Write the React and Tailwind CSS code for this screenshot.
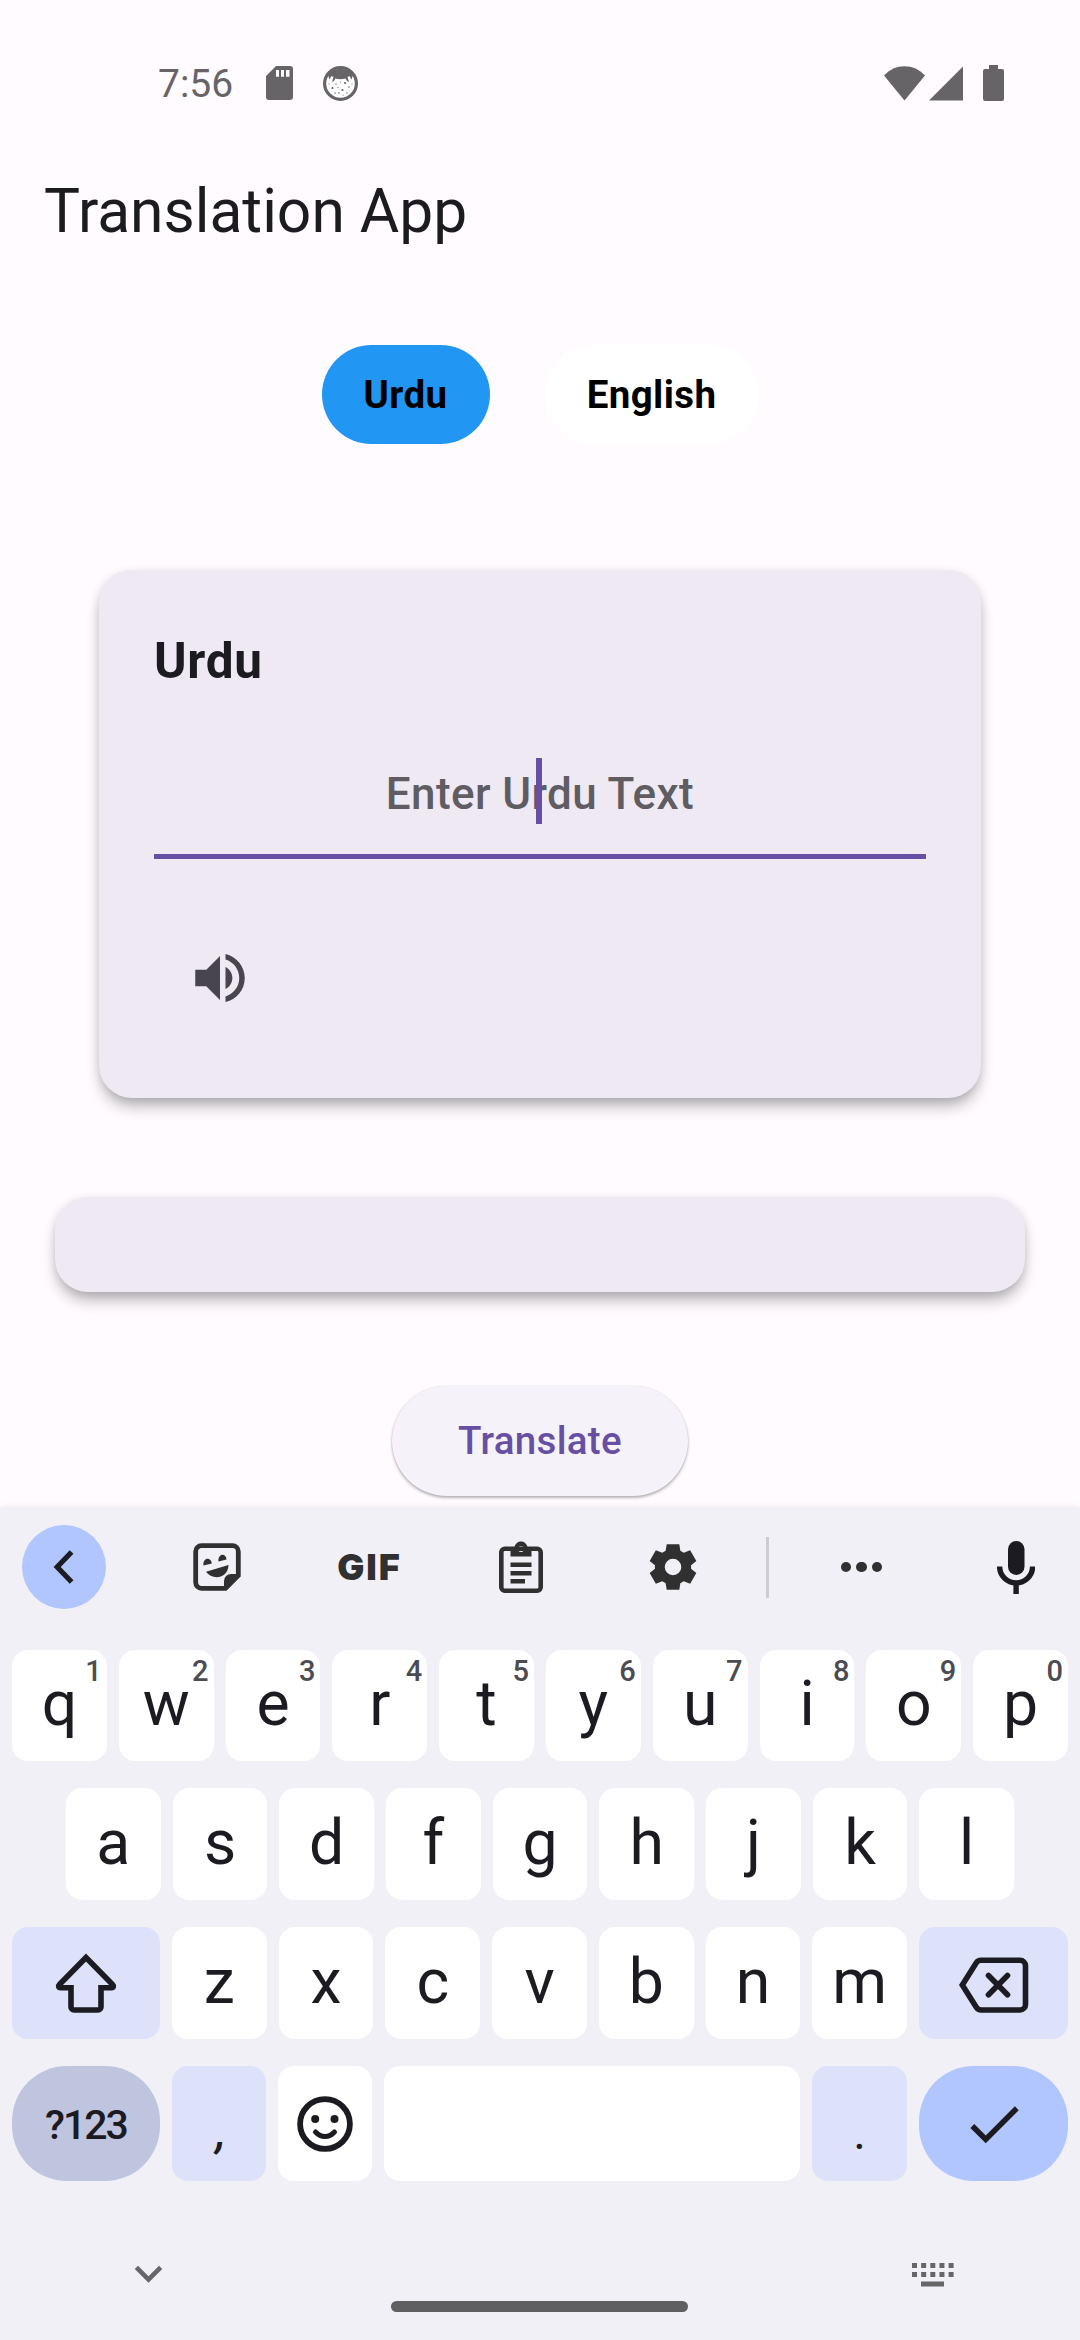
const ROW_1 = ['q', 'w', 'e', 'r', 't', 'y', 'u', 'i', 'o', 'p'];
const ROW_2 = ['a', 's', 'd', 'f', 'g', 'h', 'j', 'k', 'l'];
const ROW_3 = ['z', 'x', 'c', 'v', 'b', 'n', 'm'];

function StatusBar() {
  return (
    <div className="flex h-[124px] items-center pt-[42px] pr-[76px] pl-[158px] text-[#666467]">
      <span className="w-[108px] pt-[2px] text-[39px] leading-none">7:56</span>
      <svg width="27" height="34" viewBox="0 0 27 34" fill="currentColor">
        <path fillRule="evenodd" d="M10 0H24a3 3 0 0 1 3 3V31a3 3 0 0 1-3 3H3a3 3 0 0 1-3-3V10ZM10 4V10.700H13V4ZM15 4V10.700H18V4ZM20 4V10.700H23.500V4Z" />
      </svg>
      <svg className="ml-[30px]" width="35" height="35" viewBox="0 0 35 35" fill="currentColor">
        <circle cx="17.500" cy="17.500" r="15.900" fill="#fff" stroke="currentColor" strokeWidth="3.200" />
        <path d="M5 9C10 1 25 1 30 9L28.500 13.500l-2-3.500-2 1 1.500 5-2-1-1.500-2.500c-3 1-7 1-10 0L11 15l-2 1 1.500-5-2-1-2 3.500Z" />
        <g>
          <circle cx="9.500" cy="22" r="1.100" /><circle cx="13" cy="18" r=".7" /><circle cx="19.500" cy="24" r="1.100" />
          <circle cx="22" cy="17" r="1.100" /><circle cx="6" cy="18" r=".6" /><circle cx="16" cy="27" r=".8" />
          <circle cx="26" cy="21" r=".8" /><circle cx="12" cy="27" r=".7" /><circle cx="15" cy="21.500" r=".6" />
          <circle cx="24" cy="27" r=".7" /><circle cx="29" cy="18" r=".6" /><circle cx="20" cy="29" r=".6" /><circle cx="17.500" cy="16" r=".6" />
        </g>
      </svg>
      <div className="ml-auto flex items-center">
        <svg width="41" height="35" viewBox="0 0 41 35" fill="currentColor">
          <path d="M0 9.500C11-3 30-3 41 9.500L20.500 34.500Z" />
        </svg>
        <svg className="ml-[4px]" width="34" height="35" viewBox="0 0 34 35" fill="currentColor">
          <path d="M0 34.500L34 .5V34.500Z" />
        </svg>
        <svg className="ml-[20px]" width="21" height="36" viewBox="0 0 21 36" fill="currentColor">
          <path d="M6 0H15V4H19a2 2 0 0 1 2 2V34a2 2 0 0 1-2 2H2a2 2 0 0 1-2-2V6a2 2 0 0 1 2-2H6Z" />
        </svg>
      </div>
    </div>
  );
}

function InputCard() {
  return (
    <section className="mt-[126px] h-[528px] w-[882px] rounded-[33px] bg-[#eee9f3] px-[55px] pt-[62px] shadow-[0_10px_16px_-3px_rgba(0,0,0,0.32),0_1px_10px_rgba(0,0,0,0.08)]">
      <h2 className="text-[49.5px] leading-[58px] font-bold tracking-[0.7px] text-[#1c1b1f]">Urdu</h2>
      <div className="relative mt-[50px] flex h-[119px] items-start justify-center border-b-[5px] border-[#6750a4] pt-[28px]">
        <span className="text-[44px] leading-[52px] font-medium tracking-[0.4px] text-[#5f5c62]">Enter Urdu Text</span>
        <span className="absolute top-[18px] left-[382px] h-[66px] w-[5.500px] bg-[#6750a4]" />
      </div>
      <svg className="mt-[86px] ml-[33px]" width="66" height="66" viewBox="0 0 24 24" fill="#49454f">
        <path d="M3 9v6h4l5 5V4L7 9H3zm13.500 3c0-1.770-1.020-3.290-2.500-4.030v8.050c1.480-.73 2.500-2.250 2.500-4.020zM14 3.230v2.060c2.890.86 5 3.540 5 6.710s-2.110 5.850-5 6.710v2.060c4.010-.91 7-4.490 7-8.770s-2.990-7.860-7-8.770z" />
      </svg>
    </section>
  );
}

function ToolSlot({ children }) {
  return <div className="flex w-[152px] shrink-0 items-center justify-center">{children}</div>;
}

function Toolbar() {
  return (
    <div className="flex h-[120px] items-center pl-[22px] text-[#303030]">
      <div className="flex size-[84px] shrink-0 items-center justify-center rounded-full bg-[#b1c5ff]">
        <svg width="84" height="84" viewBox="0 0 84 84" fill="none" stroke="#1b1b21" strokeWidth="5.200">
          <path d="M49.600 27L35.200 42L49.600 57" />
        </svg>
      </div>
      <div className="ml-[34.500px] flex">
        <ToolSlot>
          <svg width="48" height="48" viewBox="0 0 48 48" fill="currentColor">
            <path d="M8.500 2.700H39.500a5.800 5.800 0 0 1 5.800 5.800V32.500L32.500 45.300H8.500a5.800 5.800 0 0 1-5.800-5.800V8.500a5.800 5.800 0 0 1 5.800-5.800Z" fill="none" stroke="currentColor" strokeWidth="4.800" />
            <path d="M31 46V38a7 7 0 0 1 7-7h8Z" />
            <path d="M10.500 22.500c-1-8 7.500-9 8.300-2ZM25.500 18.500c-.8-8 7.500-9 8-2Z" />
            <path d="M13 28.800L35.500 22c-.5 14-16.500 15.500-22.500 6.800Z" />
          </svg>
        </ToolSlot>
        <ToolSlot>
          <span className="pl-[2px] font-[Inter] text-[36px] leading-none font-black tracking-[2px]">GIF</span>
        </ToolSlot>
        <ToolSlot>
          <svg width="44" height="52" viewBox="0 0 44 52" fill="currentColor">
            <rect x="2.300" y="7.800" width="39.400" height="41.900" rx="3.500" fill="none" stroke="currentColor" strokeWidth="4.600" />
            <path fillRule="evenodd" d="M11.500 6H15.500C17-1.500 27-1.500 28.500 6H32.500V15.500H11.500ZM22 5a3 3 0 1 0 0 6a3 3 0 0 0 0-6Z" />
            <path d="M11.500 21.500h21v4.500h-21zM11.500 30h21v4.500h-21zM11.500 38h14.500v4.500h-14.500z" />
          </svg>
        </ToolSlot>
        <ToolSlot>
          <svg width="56" height="56" viewBox="0 0 24 24" fill="currentColor">
            <path fillRule="evenodd" d="M9.300 2.200H14.700L15.150 5.050L16.600 5.900L19.350 4.850L22 9.450L19.750 11.200V12.800L22 14.550L19.350 19.150L16.600 18.100L15.150 18.950L14.700 21.800H9.300L8.850 18.950L7.400 18.100L4.650 19.150L2 14.550L4.250 12.800V11.200L2 9.450L4.650 4.850L7.400 5.900L8.850 5.050ZM12 8.450a3.550 3.550 0 1 0 0 7.100a3.550 3.550 0 0 0 0-7.100Z" />
          </svg>
        </ToolSlot>
      </div>
      <div className="ml-[17.500px] h-[61px] w-[3px] shrink-0 bg-[#cccdd3]" />
      <div className="ml-[16px] flex w-[153px] shrink-0 justify-center gap-[5px]">
        <span className="size-[10.500px] rounded-full bg-[#303030]" />
        <span className="size-[10.500px] rounded-full bg-[#303030]" />
        <span className="size-[10.500px] rounded-full bg-[#303030]" />
      </div>
      <svg className="ml-[59px] shrink-0" width="38" height="54" viewBox="0 0 38 54" fill="none" stroke="#1b1b21">
        <rect x="11" y="1" width="16.500" height="34" rx="8.200" fill="#1b1b21" stroke="none" />
        <path d="M2.600 26.500a16.500 16.500 0 0 0 33 0M19.100 42V54" strokeWidth="5.400" />
      </svg>
    </div>
  );
}

function LetterKey({ label, hint }) {
  return (
    <div className="relative flex flex-1 items-center justify-center rounded-[16px] bg-white pb-[2px] text-[62.5px] leading-none text-[#1b1b21]">
      {label}
      {hint && <span className="absolute top-[6px] right-[5px] text-[29px] leading-[30px] font-medium text-[#4b4c52]">{hint}</span>}
    </div>
  );
}

function Keyboard() {
  return (
    <div className="flex h-[833px] flex-col bg-[#f1f0f7] shadow-[0_-1px_6px_rgba(60,20,40,0.06)]">
      <Toolbar />
      <div className="mt-[23px] flex h-[111px] gap-[12px] px-[12px]">
        {ROW_1.map((k, i) => (
          <LetterKey key={k} label={k} hint={String((i + 1) % 10)} />
        ))}
      </div>
      <div className="mt-[27px] flex h-[112px] gap-[12px] px-[66px]">
        {ROW_2.map((k) => (
          <LetterKey key={k} label={k} />
        ))}
      </div>
      <div className="mt-[27px] flex h-[112px] gap-[12px] px-[12px]">
        <div className="flex w-[148px] items-center justify-center rounded-[16px] bg-[#dde1f9]">
          <svg width="64" height="60" viewBox="0 0 64 60" fill="none" stroke="#1b1b21" strokeWidth="5.600">
            <path d="M32 4.500L5.500 31.500c-1.500 1.500-1 3.200 1 3.200H17V54a3 3 0 0 0 3 3H44a3 3 0 0 0 3-3V34.700H57.500c2 0 2.500-1.700 1-3.200Z" />
          </svg>
        </div>
        {ROW_3.map((k) => (
          <LetterKey key={k} label={k} />
        ))}
        <div className="flex w-[149px] items-center justify-center rounded-[16px] bg-[#dde1f9] pt-[3px]">
          <svg width="70" height="56" viewBox="0 0 70 56" fill="none" stroke="#1b1b21" strokeWidth="5.600">
            <path d="M3.300 28L17.300 5.800Q19 3.300 22 3.300H61a5.500 5.500 0 0 1 5.500 5.500V47.500a5.500 5.500 0 0 1-5.500 5.500H22Q19 53 17.300 50.300Z" />
            <path d="M29.500 18.500L48.500 37.800M48.500 18.500L29.500 37.800" strokeLinecap="round" />
          </svg>
        </div>
      </div>
      <div className="mt-[27px] flex h-[115px] gap-[12px] px-[12px] text-[#1b1b21]">
        <div className="flex w-[148px] items-center justify-center rounded-[55px] bg-[#c0c5df] pt-[4px] text-[41px] font-medium tracking-[-2px]">?123</div>
        <div className="flex w-[94px] items-end justify-center rounded-[16px] bg-[#dde1f9] pb-[27px] pl-[4px] text-[46px] leading-none font-medium italic">,</div>
        <div className="flex w-[94px] items-center justify-center rounded-[16px] bg-white">
          <svg width="56" height="56" viewBox="0 0 56 56" fill="none" stroke="#1b1b21" strokeWidth="5.800">
            <circle cx="28" cy="28" r="24.900" />
            <circle cx="18.200" cy="23" r="4" fill="#1b1b21" stroke="none" />
            <circle cx="37.500" cy="23" r="4" fill="#1b1b21" stroke="none" />
            <path d="M18.500 36c5.500 6 13.500 6 19 0" strokeWidth="5" strokeLinecap="round" />
          </svg>
        </div>
        <div className="flex-1 rounded-[16px] bg-white" />
        <div className="flex w-[95px] items-end justify-center rounded-[16px] bg-[#dde1f9] pb-[24px] text-[48px] leading-none">.</div>
        <div className="flex w-[149px] items-center justify-center rounded-[55px] bg-[#b1c5ff]">
          <svg width="66" height="66" viewBox="0 0 24 24" fill="currentColor">
            <path d="M9 16.170L4.830 12l-1.420 1.410L9 19 21 7l-1.410-1.410z" />
          </svg>
        </div>
      </div>
      <div className="flex h-[159px] pl-[121px]">
        <svg className="mt-[65px]" width="55" height="55" viewBox="0 0 24 24" fill="#666668">
          <path d="M16.590 8.590L12 13.170 7.410 8.590 6 10l6 6 6-6z" />
        </svg>
        <div className="mt-[120px] ml-[215px] h-[11px] w-[297px] rounded-full bg-[#5f5f61]" />
        <svg className="mt-[82px] ml-[224px]" width="42" height="24" viewBox="0 0 42 24" fill="#666668">
          {[0, 9.150, 18.300, 27.450, 36.600].map((x) => (
            <g key={x}>
              <rect x={x} y="0" width="5" height="5" />
              <rect x={x} y="9" width="5" height="5" />
            </g>
          ))}
          <rect x="9" y="18.500" width="23" height="5" />
        </svg>
      </div>
    </div>
  );
}

export default function App() {
  return (
    <div className="flex h-[2340px] w-[1080px] flex-col overflow-hidden bg-[#fffbff] font-[Roboto,sans-serif]">
      <div className="h-[1507px] shrink-0">
        <StatusBar />
        <h1 className="flex h-[176px] items-center pl-[44px] text-[60.5px] leading-none text-[#1c1b1f]">Translation App</h1>
        <main className="flex flex-col items-center">
          <div className="mt-[45px] flex h-[99px] gap-[55px] text-[38.5px] font-bold tracking-[0.4px] text-black">
            <button className="w-[168px] rounded-full bg-[#2196f3]">Urdu</button>
            <button className="w-[214px] rounded-full bg-white">English</button>
          </div>
          <InputCard />
          <div className="mt-[99px] h-[95px] w-[970px] rounded-[33px] bg-[#eee9f3] shadow-[0_10px_16px_-3px_rgba(0,0,0,0.32),0_1px_10px_rgba(0,0,0,0.08)]" />
          <button className="mt-[94px] h-[110px] w-[296px] rounded-full bg-[#f6f2f9] text-[38.5px] font-medium tracking-[0.3px] text-[#6750a4] shadow-[0_2px_3px_rgba(0,0,0,0.28),0_0_2px_rgba(0,0,0,0.12)]">
            Translate
          </button>
        </main>
      </div>
      <Keyboard />
    </div>
  );
}
